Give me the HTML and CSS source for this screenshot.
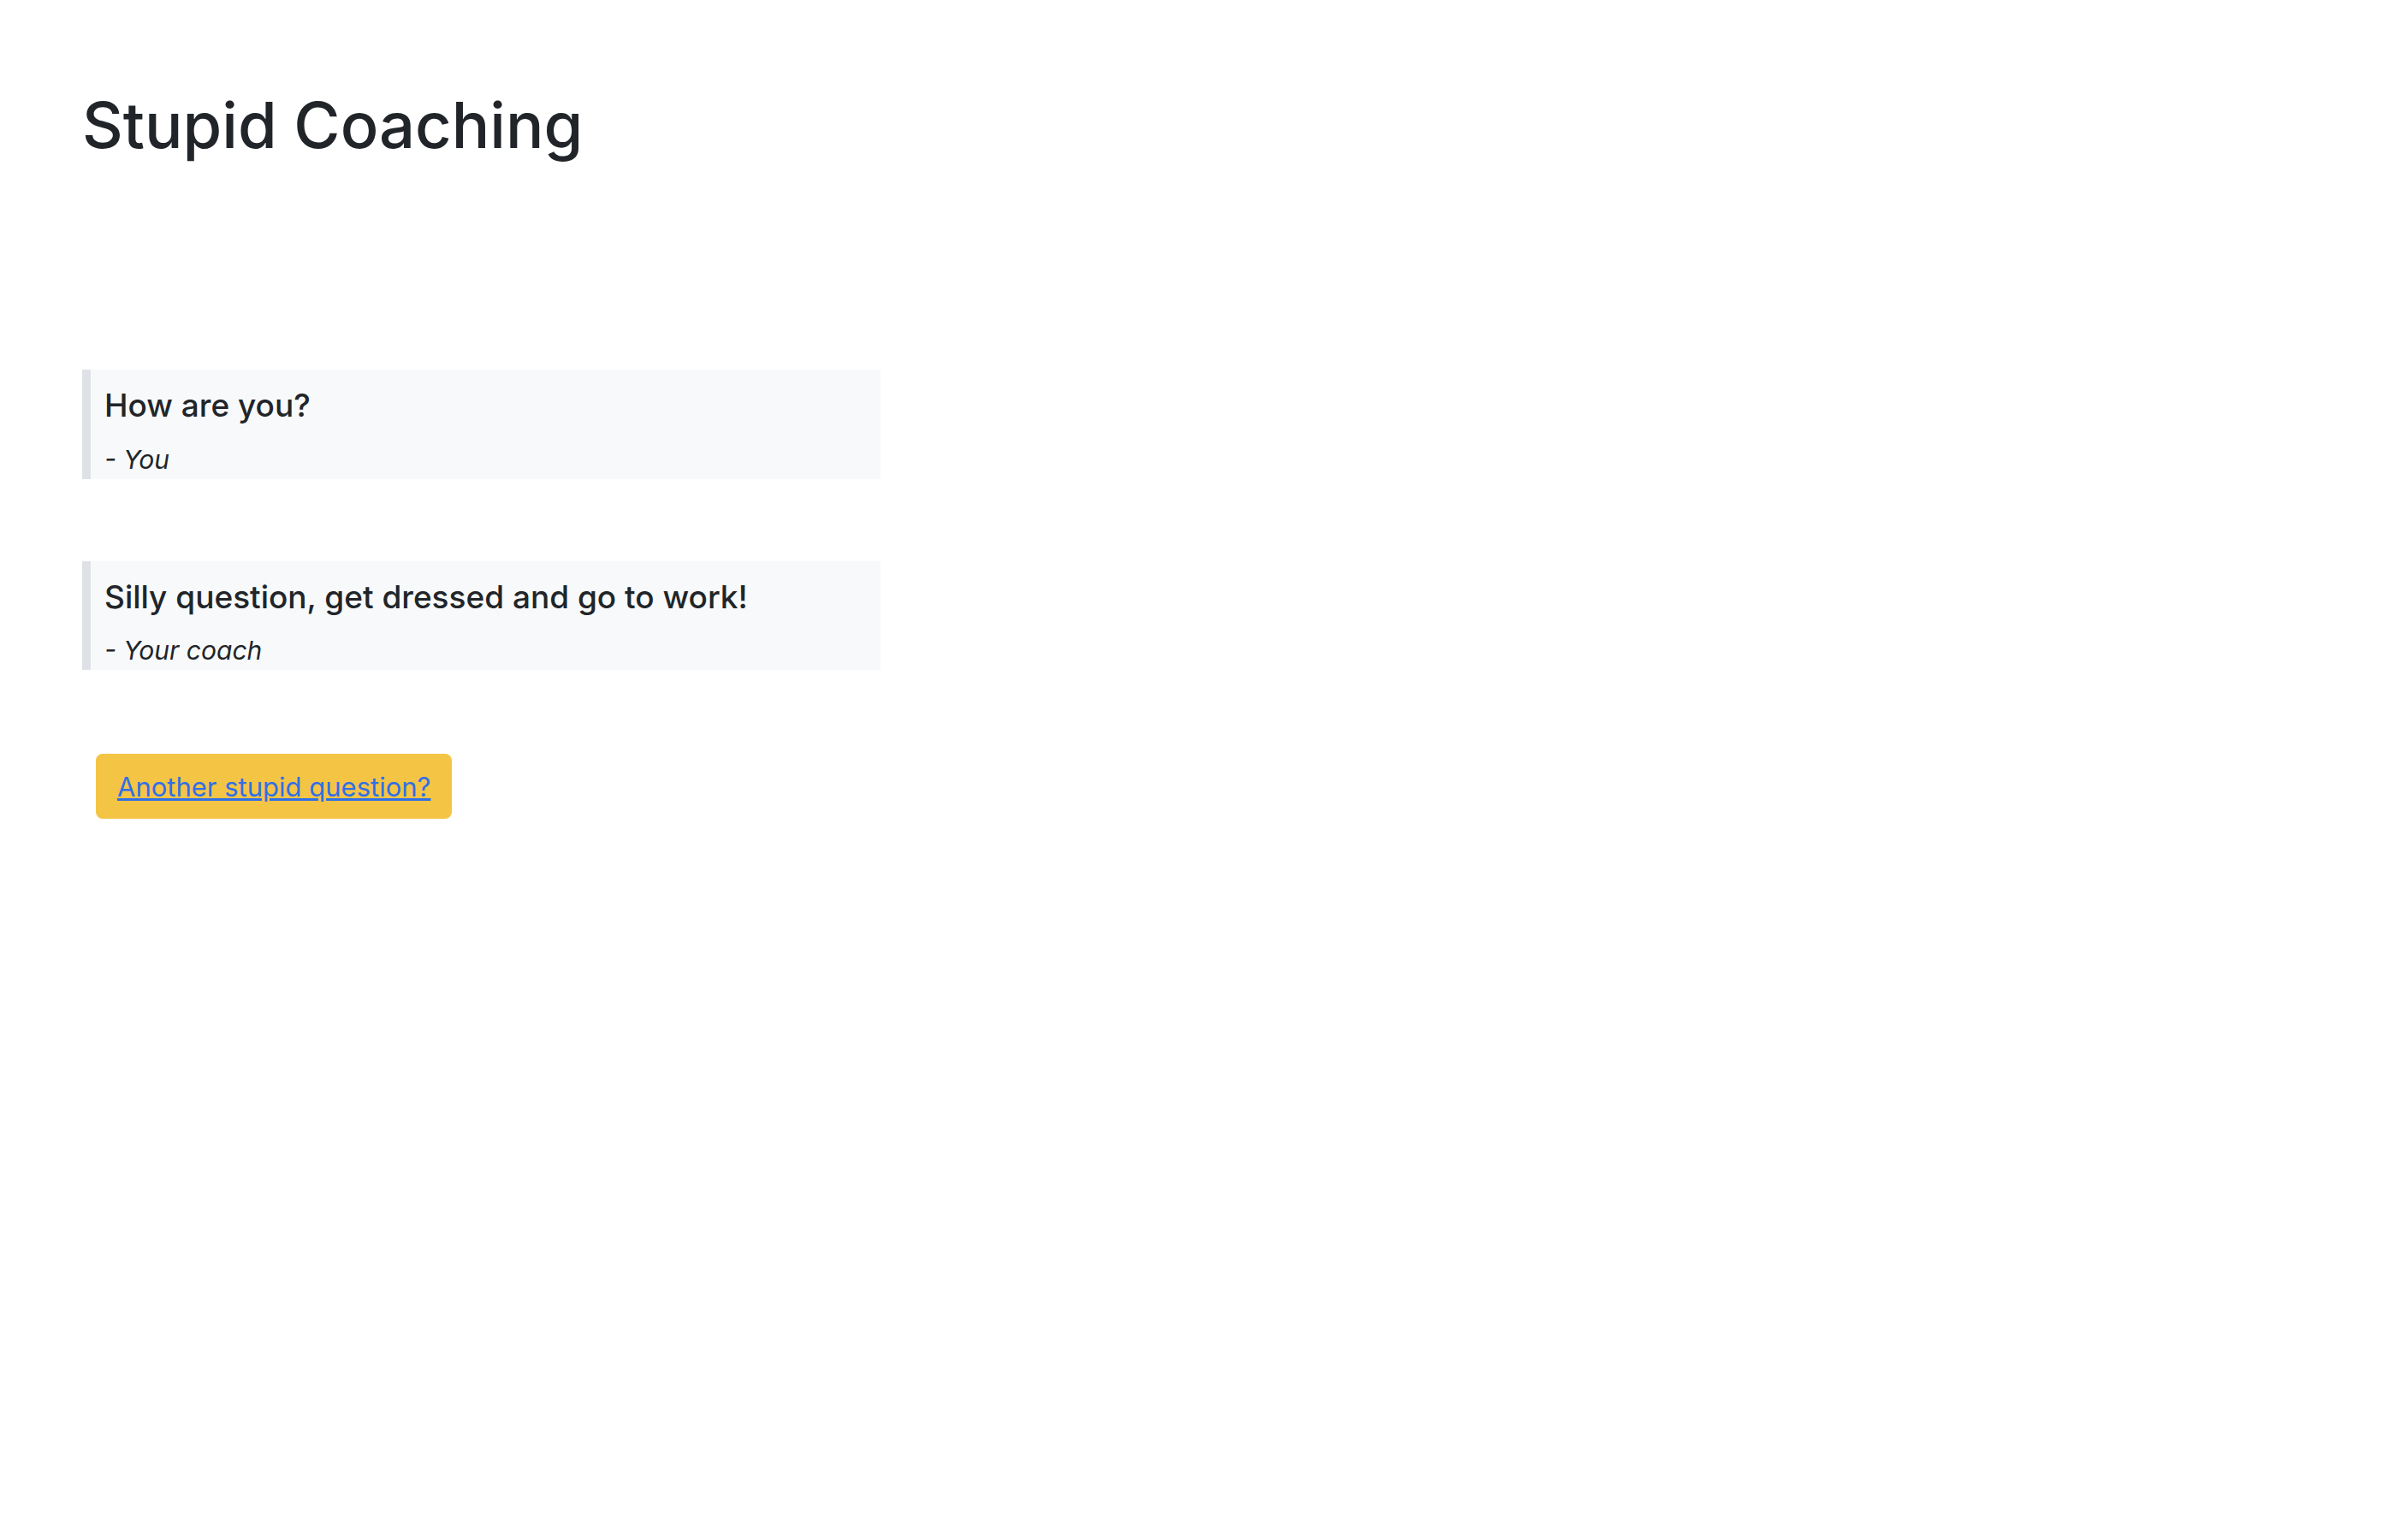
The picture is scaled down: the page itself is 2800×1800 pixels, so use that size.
FILE: index.html
```html
<!DOCTYPE html>
<html lang="en">
<head>
<meta charset="utf-8">
<title>Stupid Coaching</title>
<link rel="stylesheet" href="styles.css">
</head>
<body>
<main class="page">
  <h1 class="title">Stupid Coaching</h1>
  <section class="quotes">
    <blockquote class="quote">
      <p class="quote-text">How are you?</p>
      <p class="quote-author">- You</p>
    </blockquote>
    <blockquote class="quote">
      <p class="quote-text">Silly question, get dressed and go to work!</p>
      <p class="quote-author">- Your coach</p>
    </blockquote>
  </section>
  <div class="actions">
    <button class="btn-warning" type="button"><a href="#" class="btn-link">Another stupid question?</a></button>
  </div>
</main>
</body>
</html>
```

FILE: styles.css
```css
html, body {
  margin: 0;
  padding: 0;
  background: #ffffff;
}

body {
  font-family: Inter, "Noto Sans", "Liberation Sans", sans-serif;
  color: #212529;
}

.page {
  display: flex;
  flex-direction: column;
  align-items: flex-start;
  padding: 101px 0 0 96px;
}

.title {
  margin: 0;
  font-size: 74px;
  font-weight: 500;
  line-height: 90px;
  color: #212529;
}

.quotes {
  display: flex;
  flex-direction: column;
  gap: 96px;
  margin-top: 241px;
}

.quote {
  margin: 0;
  width: 933px;
  box-sizing: border-box;
  background: #f8f9fa;
  border-left: 10px solid #dee2e6;
  padding: 14px 16px 0 16px;
}

.quote-text {
  margin: 0 0 13px 0;
  font-size: 37px;
  line-height: 1.5;
  font-weight: 500;
}

.quote-author {
  margin: 0;
  font-size: 30px;
  line-height: 1.5;
  font-style: italic;
}

.actions {
  margin-top: 98px;
  padding-left: 16px;
}

.btn-warning {
  display: inline-flex;
  align-items: center;
  height: 76px;
  padding: 0 25px;
  background: #f4c444;
  border: none;
  border-radius: 8px;
  font-family: inherit;
}

.btn-link {
  font-size: 31px;
  color: #2f6fe8;
  text-decoration: underline;
}
```
